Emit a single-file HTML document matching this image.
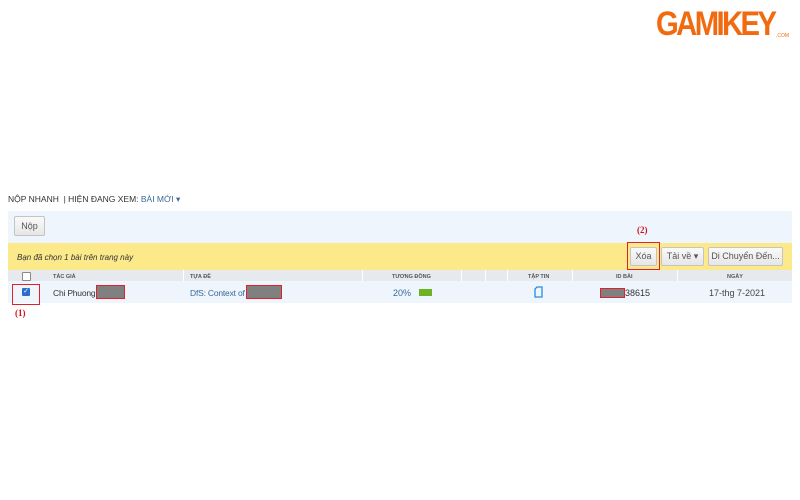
<!DOCTYPE html>
<html><head><meta charset="utf-8"><style>
body{margin:0;width:800px;height:500px;background:#fff;font-family:"Liberation Sans",Arial,sans-serif;position:relative;overflow:hidden}
.a{position:absolute}
.btn{position:absolute;background:linear-gradient(#fafafa,#e6e6e6);border:1px solid #c4c4c4;border-radius:2px;font-size:9px;color:#555;text-align:center;box-sizing:border-box}
.red{position:absolute;border:1.5px solid #e0202a;box-sizing:border-box}
.gray{position:absolute;background:#808080;border:1.5px solid #e0202a;box-sizing:border-box}
.hd{position:absolute;top:274px;font-size:5.5px;font-weight:bold;color:#555}
.lbl{position:absolute;color:#d0101a;font-weight:bold;font-family:"Liberation Serif",serif;font-size:9px}
</style></head><body>
<div class="a" style="left:656px;top:7px;font-size:34px;font-weight:900;color:#f26a10;letter-spacing:-3px;transform:scaleX(0.86);transform-origin:left;line-height:34px">GAMIKEY</div>
<div class="a" style="left:776px;top:33px;font-size:5px;color:#f26a10">.COM</div>
<div class="a" style="left:8px;top:194px;font-size:8.5px;color:#333">NỘP NHANH &nbsp;| HIỆN ĐANG XEM: <span style="color:#3a6a9a">BÀI MỚI ▾</span></div>
<div class="a" style="left:8px;top:211px;width:784px;height:32px;background:#eef5fc"></div>
<div class="btn" style="left:14px;top:216px;width:31px;height:20px;line-height:18px">Nộp</div>
<div class="a" style="left:8px;top:243px;width:784px;height:27px;background:#fbe98a"></div>
<div class="a" style="left:17px;top:253px;font-size:8px;font-style:italic;color:#333">Bạn đã chọn 1 bài trên trang này</div>
<div class="btn" style="left:630px;top:247px;width:27px;height:19px;line-height:17px">Xóa</div>
<div class="btn" style="left:661px;top:247px;width:43px;height:19px;line-height:17px">Tải về ▾</div>
<div class="btn" style="left:708px;top:247px;width:75px;height:19px;line-height:17px">Di Chuyển Đến...</div>
<div class="a" style="left:8px;top:270px;width:784px;height:11px;background:#e6e9ed"></div>
<div class="a" style="left:8px;top:281px;width:784px;height:22px;background:#eef5fc"></div>
<div class="a" style="left:22px;top:272px;width:7px;height:7px;border:1px solid #888;background:#fff;border-radius:1px"></div>
<div class="hd" style="left:53px">TÁC GIẢ</div>
<div class="hd" style="left:190px">TỰA ĐỀ</div>
<div class="hd" style="left:392px">TƯƠNG ĐỒNG</div>
<div class="hd" style="left:528px">TẬP TIN</div>
<div class="hd" style="left:616px">ID BÀI</div>
<div class="hd" style="left:727px">NGÀY</div>
<div class="a" style="left:183px;top:270px;width:1px;height:11px;background:#fff"></div>
<div class="a" style="left:362px;top:270px;width:1px;height:11px;background:#fff"></div>
<div class="a" style="left:461px;top:270px;width:1px;height:11px;background:#fff"></div>
<div class="a" style="left:485px;top:270px;width:1px;height:11px;background:#fff"></div>
<div class="a" style="left:507px;top:270px;width:1px;height:11px;background:#fff"></div>
<div class="a" style="left:572px;top:270px;width:1px;height:11px;background:#fff"></div>
<div class="a" style="left:677px;top:270px;width:1px;height:11px;background:#fff"></div>
<div class="a" style="left:22px;top:288px;width:8px;height:8px;background:#2a6fc9;border-radius:1px;color:#fff;font-size:7px;line-height:8px;text-align:center">✓</div>
<div class="a" style="left:53px;top:288px;font-size:8.5px;color:#333;letter-spacing:-0.2px">Chi Phuong</div>
<div class="gray" style="left:96px;top:285px;width:29px;height:14px"></div>
<div class="a" style="left:190px;top:288px;font-size:8.5px;color:#3a6a9a;letter-spacing:-0.2px">DfS: Context of</div>
<div class="gray" style="left:246px;top:285px;width:36px;height:14px"></div>
<div class="a" style="left:393px;top:288px;font-size:9px;color:#3a6a9a">20%</div>
<div class="a" style="left:419px;top:289px;width:13px;height:7px;background:#6bb320"></div>
<svg class="a" style="left:534px;top:286px" width="9" height="12" viewBox="0 0 9 12"><path d="M3 1H8V11H1V3Z" fill="none" stroke="#2a8ae0" stroke-width="1.3"/></svg>
<div class="gray" style="left:600px;top:288px;width:25px;height:10px"></div>
<div class="a" style="left:625px;top:288px;font-size:9px;color:#333">38615</div>
<div class="a" style="left:709px;top:288px;font-size:9px;color:#444">17-thg 7-2021</div>
<div class="red" style="left:12px;top:284px;width:28px;height:21px"></div>
<div class="lbl" style="left:15px;top:308px">(1)</div>
<div class="red" style="left:627px;top:242px;width:33px;height:28px"></div>
<div class="lbl" style="left:637px;top:225px">(2)</div>
</body></html>
